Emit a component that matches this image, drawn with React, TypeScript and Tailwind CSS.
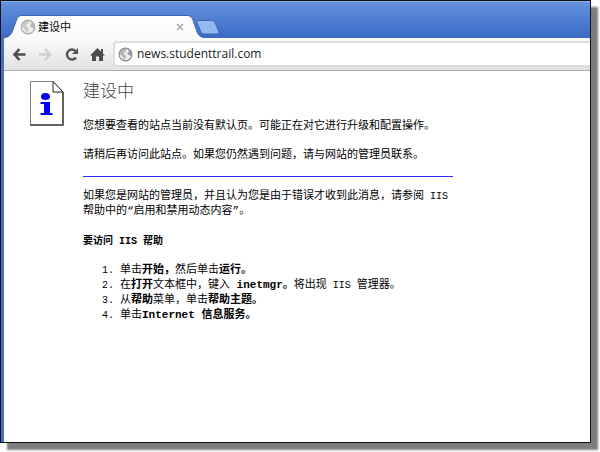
import { useState } from "react";

function Globe({ className }: { className?: string }) {
    return (
        <svg viewBox="0 0 16 16" className={className} aria-hidden="true">
            <circle cx="8" cy="8" r="6.800" fill="#efefef" stroke="currentColor" strokeWidth="1.200" />
            <path d="M2.500 5Q4 2.200 7.500 1.800L9.500 3 8 4.500 6.500 5 7 6.500 5.500 7.500 8 8.800 9 10.500 7.500 12v2.200Q5.500 13.500 5.500 11.500L3.500 9 2 8z" fill="currentColor" fillOpacity=".55" />
            <path d="M11 2.500Q13.800 4 14.200 7.500L13.800 10 12 8.500 10.500 8 10 6.500 11.500 5z" fill="currentColor" fillOpacity=".8" />
        </svg>
    );
}

function TabShape() {
    return (
        <svg viewBox="0 0 200 24" className="absolute inset-0 h-[24px] w-[200px]" aria-hidden="true">
            <defs>
                <linearGradient id="tab" x1="0" y1="0" x2="0" y2="1">
                    <stop offset="0" stopColor="#ffffff" />
                    <stop offset="1" stopColor="#f9f9f9" />
                </linearGradient>
            </defs>
            <path
                d="M0 24V23C5 22 7 20 8.500 16L13 4Q14 1 17 1H184Q187 1 188.500 4L193 17Q195 22 200 23V24z"
                fill="url(#tab)"
            />
            <path
                d="M0 23C5 22 7 20 8.500 16L13 4Q14 .5 17 .5H184Q187 .5 188.500 4L193 17Q195 22 200 22.500"
                fill="none"
                stroke="#36559c"
                strokeOpacity=".7"
            />
        </svg>
    );
}

function InfoPage() {
    return (
        <svg viewBox="0 0 34 45" className="mt-[10px] h-[45px] w-[34px] shrink-0" aria-hidden="true">
            <path d="M.5 44V.5H23L33 11v33z" fill="#fff" stroke="#808080" />
            <path d="M33 11v33H0" fill="none" stroke="#444" strokeWidth="1.500" />
            <path d="M23 .5V11h10z" fill="#fff" stroke="#222" />
            <ellipse cx="15.500" cy="15.500" rx="4.500" ry="3.500" fill="#0000f5" />
            <path d="M10.500 21H20V32h2.500v2h-12v-2H14v-9h-3.500z" fill="#0000f5" />
        </svg>
    );
}

const navButtons = [
    {
        label: "后退",
        color: "text-[#4d4d4d]",
        icon: <path d="M7.500 2 2.500 7.500l5 5.500M3 7.500h10.500" fill="none" stroke="currentColor" strokeWidth="2.600" />,
    },
    {
        label: "前进",
        color: "text-[#cfcfcf]",
        icon: <path d="m7 2 5 5.500L7 13M11.500 7.500H1" fill="none" stroke="currentColor" strokeWidth="2.600" />,
    },
    {
        label: "重新加载",
        color: "text-[#555555]",
        icon: (
            <>
                <path d="M12 10.500A5 5 0 1 1 11.500 4" fill="none" stroke="currentColor" strokeWidth="2.400" />
                <path d="M14 1v6H8z" fill="currentColor" />
            </>
        ),
    },
    {
        label: "主页",
        color: "text-[#4d4d4d]",
        icon: <path d="M7.500 1 11 4.500V2h2v4.500L15 8.500h-2V14H9V9.500H6V14H2V8.500H0z" fill="currentColor" />,
    },
];

export default function App() {
    const [url, setUrl] = useState("news.studenttrail.com");

    return (
        <div className="flex min-h-screen bg-white pr-[9px] pb-[9px]">
            <div className="flex min-w-0 flex-1 flex-col border border-[#111] bg-[#4470c8] shadow-[7px_7px_2px_#7d7d7d]">
                <header className="flex h-[37px] items-end border-t border-[#8eaee8] bg-linear-to-b from-[#6492df] to-[#3b6ac5] pl-[3px]">
                    <div className="relative flex h-[23px] w-[192px] items-center pr-3 pl-4">
                        <TabShape />
                        <Globe className="relative h-4 w-4 text-[#a8a8a8]" />
                        <span className="relative ml-[2px] flex-1 font-['Liberation_Sans','Noto_Sans_CJK_SC',sans-serif] text-[11px] leading-4 text-black">
                            建设中
                        </span>
                        <button aria-label="关闭标签页" className="relative text-[#aaa]">
                            <svg viewBox="0 0 8 8" className="h-2 w-2">
                                <path d="m1 1 6 6M7 1 1 7" stroke="currentColor" strokeWidth="1.500" />
                            </svg>
                        </button>
                    </div>
                    <button aria-label="新标签页" className="mb-[3px]">
                        <svg viewBox="0 0 24 15" className="h-[15px] w-[24px]">
                            <path
                                d="M2 .5H16Q18 .5 19 2.500L23 12Q23.500 14 21.500 14H8Q6 14 5 12L1 2.500Q.5 .5 2 .5z"
                                fill="#94b8f0"
                                stroke="#3f64ad"
                            />
                        </svg>
                    </button>
                </header>

                <main className="ml-[3px] flex flex-1 flex-col bg-white">
                    <nav className="flex h-[33px] items-center border-b border-[#a9adb5] bg-linear-to-b from-[#fafafa] to-[#e2e2e2] pl-2">
                        <div className="mr-2 flex gap-[11px]">
                            {navButtons.map((b) => (
                                <button key={b.label} aria-label={b.label} className={b.color}>
                                    <svg viewBox="0 0 15 15" className="h-[15px] w-[15px]">{b.icon}</svg>
                                </button>
                            ))}
                        </div>
                        <label className="flex h-[26px] min-w-0 flex-1 items-center rounded-l-[4px] border-2 border-r-0 border-[#dedede] bg-white pl-[3px]">
                            <Globe className="h-[15px] w-[15px] shrink-0 text-[#888]" />
                            <input
                                type="text"
                                aria-label="地址"
                                value={url}
                                onChange={(e) => setUrl(e.target.value)}
                                className="ml-1 min-w-0 flex-1 bg-transparent font-['Open_Sans',sans-serif] text-[12px] leading-5 text-[#222] outline-none"
                            />
                        </label>
                    </nav>

                    <article className="flex px-[26px] font-['Liberation_Mono','Noto_Sans_CJK_SC',monospace] text-[11px] leading-[15px] text-black">
                        <InfoPage />
                        <div className="ml-[19px] w-full max-w-[370px]">
                            <h1 className="mt-[10px] text-[17px] leading-6 font-light text-[#444]">建设中</h1>
                            <p className="mt-[14px]">您想要查看的站点当前没有默认页。可能正在对它进行升级和配置操作。</p>
                            <p className="mt-[14px]">请稍后再访问此站点。如果您仍然遇到问题，请与网站的管理员联系。</p>
                            <hr className="mt-[13px] mb-[12px] h-px border-0 bg-[#2a2af5]" />
                            <p>
                                如果您是网站的管理员，并且认为您是由于错误才收到此消息，请参阅<span className="text-[10px]"> IIS </span>
                                帮助中的“启用和禁用动态内容”。
                            </p>
                            <h2 className="mt-[15px] text-[10px] font-bold">要访问 IIS 帮助</h2>
                            <ol className="mt-[14px] list-decimal pl-[37px] marker:text-[10px]">
                                <li>单击<b>开始，</b>然后单击<b>运行。</b></li>
                                <li>在<b>打开</b>文本框中，键入 <b>inetmgr。</b>将出现<span className="text-[10px]"> IIS </span>管理器。</li>
                                <li>从<b>帮助</b>菜单，单击<b>帮助主题。</b></li>
                                <li>单击<b>Internet 信息服务。</b></li>
                            </ol>
                        </div>
                    </article>
                </main>
            </div>
        </div>
    );
}
